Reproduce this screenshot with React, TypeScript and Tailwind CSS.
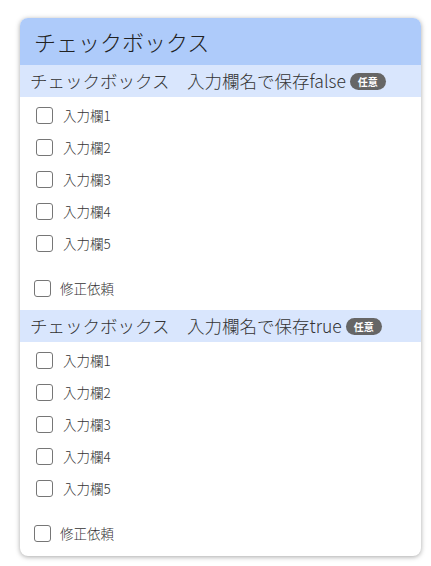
const SECTIONS = [
  { title: 'チェックボックス　入力欄名で保存false' },
  { title: 'チェックボックス　入力欄名で保存true' },
]

const ITEMS = ['入力欄1', '入力欄2', '入力欄3', '入力欄4', '入力欄5']

function Box() {
  return (
    <span className="inline-block h-[17px] w-[17px] shrink-0 rounded-[3px] border border-[#767676] bg-white" />
  )
}

export default function App() {
  return (
    <div
      className="min-h-[566px] bg-white pl-[20px] pr-[10px] pt-[18px]"
      style={{ fontFamily: '"Segoe UI", "Noto Sans CJK JP", "Noto Sans", sans-serif' }}
    >
      <div className="overflow-hidden rounded-[8px] bg-white font-light text-[#333] shadow-[0_1px_5px_rgba(0,0,0,0.35)]">
        <div className="flex h-[47px] items-center bg-[#aecbfa] pl-[14px] text-[22px] text-[#222]">
          チェックボックス
        </div>
        {SECTIONS.map((s) => (
          <div key={s.title} className="pb-[6px]">
            <div className="flex h-[32px] items-center gap-[4px] bg-[#d9e6fd] pl-[10px] text-[17.5px] text-[#333]">
              <span>{s.title}</span>
              <span className="flex h-[17px] items-center rounded-full bg-[#666] px-[8px] text-[10px] font-semibold text-white">
                任意
              </span>
            </div>
            <div className="flex flex-col pt-[2px]">
              {ITEMS.map((it) => (
                <label key={it} className="flex h-[32px] items-center gap-[10px] pl-[16px] text-[13.5px]">
                  <Box />
                  <span>{it}</span>
                </label>
              ))}
            </div>
            <label className="mt-[13px] flex h-[32px] items-center gap-[9px] pl-[14px] text-[13.5px]">
              <Box />
              <span>修正依頼</span>
            </label>
          </div>
        ))}
        <div className="h-[1px]" />
      </div>
    </div>
  )
}
